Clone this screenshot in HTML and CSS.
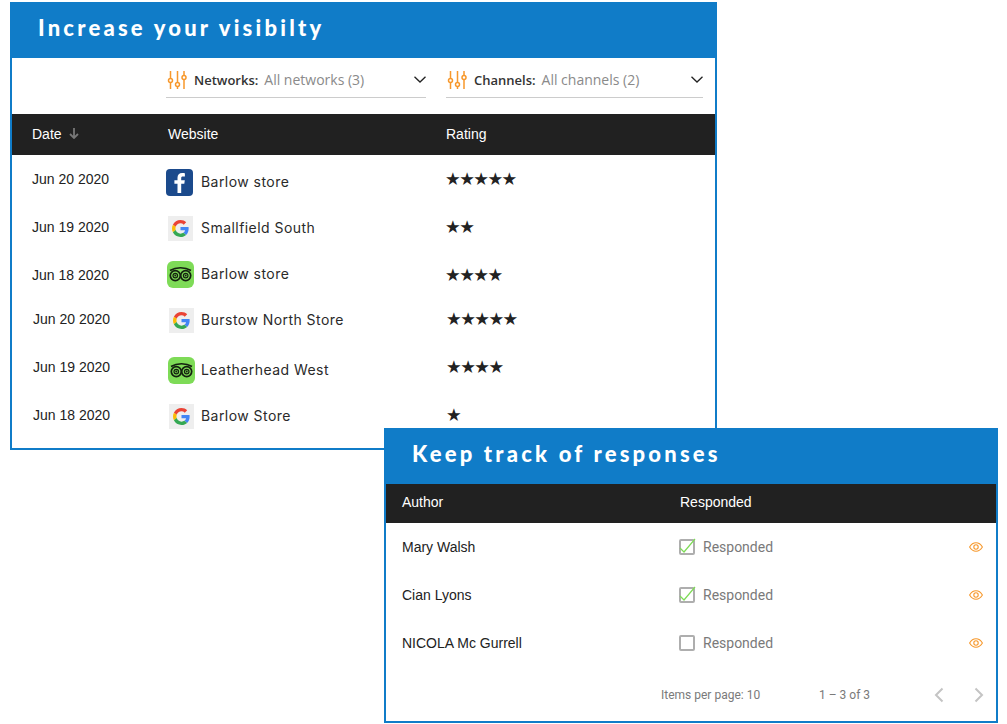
FILE: index.html
```html
<!DOCTYPE html>
<html lang="en">
<head>
  <meta charset="UTF-8">
  <title>Reviews</title>
  <link rel="stylesheet" href="styles.css">
</head>
<body>
  <svg class="sprite" aria-hidden="true">
    <symbol id="i-sliders" viewBox="0 0 20 20">
      <g fill="none" stroke="#f7982b" stroke-width="1.500">
        <path d="M3.500 1v7.500M3.500 12.500v6.500M10.500 1v11.500M10.500 16.500v2.500M17 1v4.500M17 9.500v9.500"/>
        <circle cx="3.500" cy="10.500" r="2"/>
        <circle cx="10.500" cy="14.500" r="2"/>
        <circle cx="17" cy="7.500" r="2"/>
      </g>
    </symbol>
    <symbol id="i-chevron" viewBox="0 0 12 7">
      <path d="M.5.700 6 6 11.500.700" fill="none" stroke="#222" stroke-width="1.300"/>
    </symbol>
    <symbol id="i-google" viewBox="0 0 25 25">
      <rect width="25" height="25" fill="#eeeeee"/>
      <g transform="translate(4 4) scale(.354)">
        <path fill="#EA4335" d="M24 9.500c3.540 0 6.710 1.220 9.210 3.600l6.850-6.850C35.900 2.380 30.470 0 24 0 14.620 0 6.510 5.380 2.560 13.220l7.980 6.190C12.430 13.720 17.740 9.500 24 9.500z"/>
        <path fill="#4285F4" d="M46.980 24.550c0-1.570-.15-3.090-.38-4.550H24v9.020h12.940c-.58 2.960-2.260 5.480-4.780 7.180l7.730 6c4.510-4.180 7.090-10.360 7.090-17.650z"/>
        <path fill="#FBBC05" d="M10.530 28.590c-.48-1.450-.76-2.990-.76-4.590s.27-3.140.76-4.590l-7.980-6.190C.92 16.460 0 20.120 0 24c0 3.880.92 7.540 2.560 10.780l7.970-6.190z"/>
        <path fill="#34A853" d="M24 48c6.480 0 11.930-2.130 15.890-5.810l-7.730-6c-2.150 1.450-4.920 2.300-8.160 2.300-6.260 0-11.570-4.220-13.470-9.910l-7.980 6.190C6.510 42.620 14.620 48 24 48z"/>
      </g>
    </symbol>
    <symbol id="i-facebook" viewBox="0 0 27 27">
      <rect width="27" height="27" rx="4" fill="#1b4a8c"/>
      <path fill="#fff" d="M15.200 24v-9.200h3.100l.5-3.500h-3.600V9.100c0-1 .3-1.700 1.800-1.700h1.900V4.200c-.4 0-1.500-.2-2.800-.2-2.800 0-4.600 1.700-4.600 4.700v2.600H8.400v3.500h3.100V24z"/>
    </symbol>
    <symbol id="i-tripadvisor" viewBox="0 0 27 27">
      <rect width="27" height="27" rx="6" fill="#7edb57"/>
      <g fill="none" stroke="#14210f">
        <path d="M3 9.500c3-1.800 6.500-2.700 10.500-2.700s7.500.9 10.500 2.700" stroke-width="1.600"/>
        <circle cx="8.300" cy="14.600" r="5" stroke-width="1.700"/>
        <circle cx="18.700" cy="14.600" r="5" stroke-width="1.700"/>
        <circle cx="8.300" cy="14.600" r="2.300" stroke-width="1.200"/>
        <circle cx="18.700" cy="14.600" r="2.300" stroke-width="1.200"/>
      </g>
      <circle cx="8.300" cy="14.600" r="1" fill="#14210f"/>
      <circle cx="18.700" cy="14.600" r="1" fill="#14210f"/>
    </symbol>
    <symbol id="i-eye" viewBox="0 0 14 10">
      <g fill="none" stroke="#f7982b" stroke-width="1.100">
        <path d="M.6 5C2.200 2.300 4.400.8 7 .8s4.800 1.500 6.400 4.200C11.800 7.700 9.600 9.200 7 9.200S2.200 7.700.6 5z"/>
        <circle cx="7" cy="5" r="2.200"/>
      </g>
    </symbol>
    <symbol id="i-pager" viewBox="0 0 10 16">
      <path d="M8.500 1.500 2 8l6.500 6.500" fill="none" stroke="#c4c4c4" stroke-width="2"/>
    </symbol>
  </svg>

  <section class="panel panel-reviews">
    <h2 class="panel-title">Increase your visibilty</h2>

    <div class="filters">
      <div class="filter filter-networks">
        <svg class="filter-icon"><use href="#i-sliders"/></svg>
        <span class="filter-label">Networks:</span>
        <span class="filter-value">All networks (3)</span>
        <svg class="chevron"><use href="#i-chevron"/></svg>
      </div>
      <div class="filter filter-channels">
        <svg class="filter-icon"><use href="#i-sliders"/></svg>
        <span class="filter-label">Channels:</span>
        <span class="filter-value">All channels (2)</span>
        <svg class="chevron"><use href="#i-chevron"/></svg>
      </div>
    </div>

    <div class="review-head">
      <span class="sort-col">Date
        <svg class="sort-arrow" viewBox="0 0 10 11"><path d="M5 0v10M1 6l4 4 4-4" fill="none" stroke="#777" stroke-width="1.800"/></svg>
      </span>
      <span class="website-col">Website</span>
      <span>Rating</span>
    </div>

    <div class="review-row">
      <span class="date">Jun 20 2020</span>
      <span class="site drop-3"><svg class="logo logo-fb"><use href="#i-facebook"/></svg>Barlow store</span>
      <span class="stars">★★★★★</span>
    </div>
    <div class="review-row">
      <span class="date">Jun 19 2020</span>
      <span class="site drop-1"><svg class="logo logo-g"><use href="#i-google"/></svg>Smallfield South</span>
      <span class="stars">★★</span>
    </div>
    <div class="review-row">
      <span class="date">Jun 18 2020</span>
      <span class="site rise-1"><svg class="logo logo-ta"><use href="#i-tripadvisor"/></svg>Barlow store</span>
      <span class="stars">★★★★</span>
    </div>
    <div class="review-row row-short nudged">
      <span class="date">Jun 20 2020</span>
      <span class="site drop-1"><svg class="logo logo-g"><use href="#i-google"/></svg>Burstow North Store</span>
      <span class="stars">★★★★★</span>
    </div>
    <div class="review-row nudged">
      <span class="date">Jun 19 2020</span>
      <span class="site drop-3"><svg class="logo logo-ta"><use href="#i-tripadvisor"/></svg>Leatherhead West</span>
      <span class="stars">★★★★</span>
    </div>
    <div class="review-row nudged">
      <span class="date">Jun 18 2020</span>
      <span class="site drop-1"><svg class="logo logo-g"><use href="#i-google"/></svg>Barlow Store</span>
      <span class="stars">★</span>
    </div>
  </section>

  <section class="panel panel-responses">
    <h2 class="panel-title">Keep track of responses</h2>

    <div class="response-head">
      <span>Author</span>
      <span>Responded</span>
    </div>

    <div class="response-row">
      <span class="author">Mary Walsh</span>
      <span class="responded">
        <span class="checkbox"><svg class="tick" viewBox="0 0 17 15"><path d="M1 10l4 4L16 1" fill="none" stroke="#7edb57" stroke-width="1.200"/></svg></span>
        Responded
      </span>
      <svg class="eye"><use href="#i-eye"/></svg>
    </div>
    <div class="response-row">
      <span class="author">Cian Lyons</span>
      <span class="responded">
        <span class="checkbox"><svg class="tick" viewBox="0 0 17 15"><path d="M1 10l4 4L16 1" fill="none" stroke="#7edb57" stroke-width="1.200"/></svg></span>
        Responded
      </span>
      <svg class="eye"><use href="#i-eye"/></svg>
    </div>
    <div class="response-row">
      <span class="author">NICOLA Mc Gurrell</span>
      <span class="responded">
        <span class="checkbox"></span>
        Responded
      </span>
      <svg class="eye"><use href="#i-eye"/></svg>
    </div>

    <div class="pager">
      <span class="pager-size">Items per page: 10</span>
      <span class="pager-range">1 – 3 of 3</span>
      <svg class="pager-btn"><use href="#i-pager"/></svg>
      <svg class="pager-btn pager-next"><use href="#i-pager"/></svg>
    </div>
  </section>
</body>
</html>
```

FILE: styles.css
```css
body {
  margin: 0;
  background: #fff;
  font-family: "Liberation Sans", Arial, sans-serif;
  color: #222;
}
.sprite { display: none; }

/* the two cards sit on a free canvas, second one overlaps the first */
.panel {
  position: absolute;
  box-sizing: border-box;
  background: #fff;
  border: 2px solid #107cc8;
  border-top: 0;
}
.panel-reviews { left: 10px; top: 2px; width: 707px; height: 448px; }
.panel-responses { left: 384px; top: 428px; width: 614px; height: 295px; }

.panel-title {
  margin: 0 -2px;
  height: 56px;
  line-height: 52px;
  background: #107cc8;
  color: #fff;
  font-family: Lato, sans-serif;
  font-size: 22px;
  font-weight: 900;
  letter-spacing: 3.2px;
  padding-left: 28px;
}

/* filters */
.filters {
  display: flex;
  height: 56px;
  padding-left: 154px;
  font-family: "Open Sans", sans-serif;
  font-size: 14px;
}
.filter {
  display: flex;
  align-items: center;
  box-sizing: border-box;
  height: 40px;
  border-bottom: 1px solid #ccc;
  padding-top: 4px;
}
.filter-networks { width: 260px; margin-right: 20px; }
.filter-channels { width: 257px; }
.filter-icon { width: 20px; height: 20px; margin: 0 7px 0 1px; }
.filter-label { font-weight: 600; color: #333; margin-right: 6px; font-size: 13px; }
.filter-value { color: #8a8a8a; }
.chevron { width: 12px; height: 7px; margin-left: auto; margin-right: 0; }

/* reviews table */
.review-head, .review-row {
  display: grid;
  grid-template-columns: 154px 280px 1fr;
  align-items: center;
}
.review-head {
  height: 41px;
  padding-bottom: 2px;
  box-sizing: border-box;
  background: #212121;
  color: #fff;
  font-size: 14px;
}
.sort-col { padding-left: 20px; display: flex; align-items: center; gap: 7px; }
.sort-arrow { width: 10px; height: 11px; }
.website-col { padding-left: 2px; }
.review-row { height: 48px; }
.row-short { height: 40px; margin-bottom: 4px; }

.date { padding-left: 20px; font-size: 14px; color: #222; }
.nudged .date { padding-left: 21px; }
.site {
  display: flex;
  align-items: center;
  font-family: Inter, sans-serif;
  font-size: 14px;
  letter-spacing: .45px;
  color: #2a2a2a;
}
.drop-3 { padding-top: 4px; }
.rise-1 { padding-bottom: 4px; }
.logo { flex: none; margin-top: 2px; margin-right: 8px; }
.logo-fb { width: 27px; height: 27px; }
.logo-g { width: 25px; height: 25px; margin-left: 2px; }
.logo-ta { width: 27px; height: 27px; margin-left: 1px; margin-right: 7px; }
.nudged .logo-g { margin-left: 3px; margin-right: 7px; }
.nudged .logo-ta { margin-left: 2px; margin-right: 6px; }

.stars {
  font-family: "DejaVu Sans", sans-serif;
  font-size: 17.500px;
  letter-spacing: -1.550px;
  line-height: 20px;
  color: #222;
  margin-left: -1px;
}
.nudged .stars { padding-left: 1px; }

/* responses table */
.response-head, .response-row {
  display: grid;
  grid-template-columns: 277px 1fr auto;
  align-items: center;
}
.response-head {
  grid-template-columns: 278px 1fr;
  box-sizing: border-box;
  height: 39px;
  padding: 0 0 4px 16px;
  background: #212121;
  color: #fff;
  font-size: 14px;
}
.response-row { height: 48px; padding: 0 13px 0 16px; }
.author { font-size: 14px; color: #222; }
.responded {
  display: flex;
  align-items: center;
  gap: 8px;
  font-family: Roboto, sans-serif;
  font-size: 14px;
  color: #7a7a7a;
}
.checkbox {
  position: relative;
  box-sizing: border-box;
  width: 16px;
  height: 16px;
  border: 2px solid #aeaeae;
  border-radius: 2px;
}
.tick { position: absolute; left: -2px; top: -3px; width: 17px; height: 15px; }
.eye { width: 14px; height: 10px; }

.pager {
  display: flex;
  align-items: center;
  height: 56px;
  padding-left: 275px;
  font-family: Roboto, sans-serif;
  font-size: 12px;
  color: #7a7a7a;
}
.pager-size { width: 158px; }
.pager-range { width: 115px; }
.pager-btn { width: 10px; height: 16px; margin-right: 30px; }
.pager-next { transform: scaleX(-1); margin-right: 0; }
```
